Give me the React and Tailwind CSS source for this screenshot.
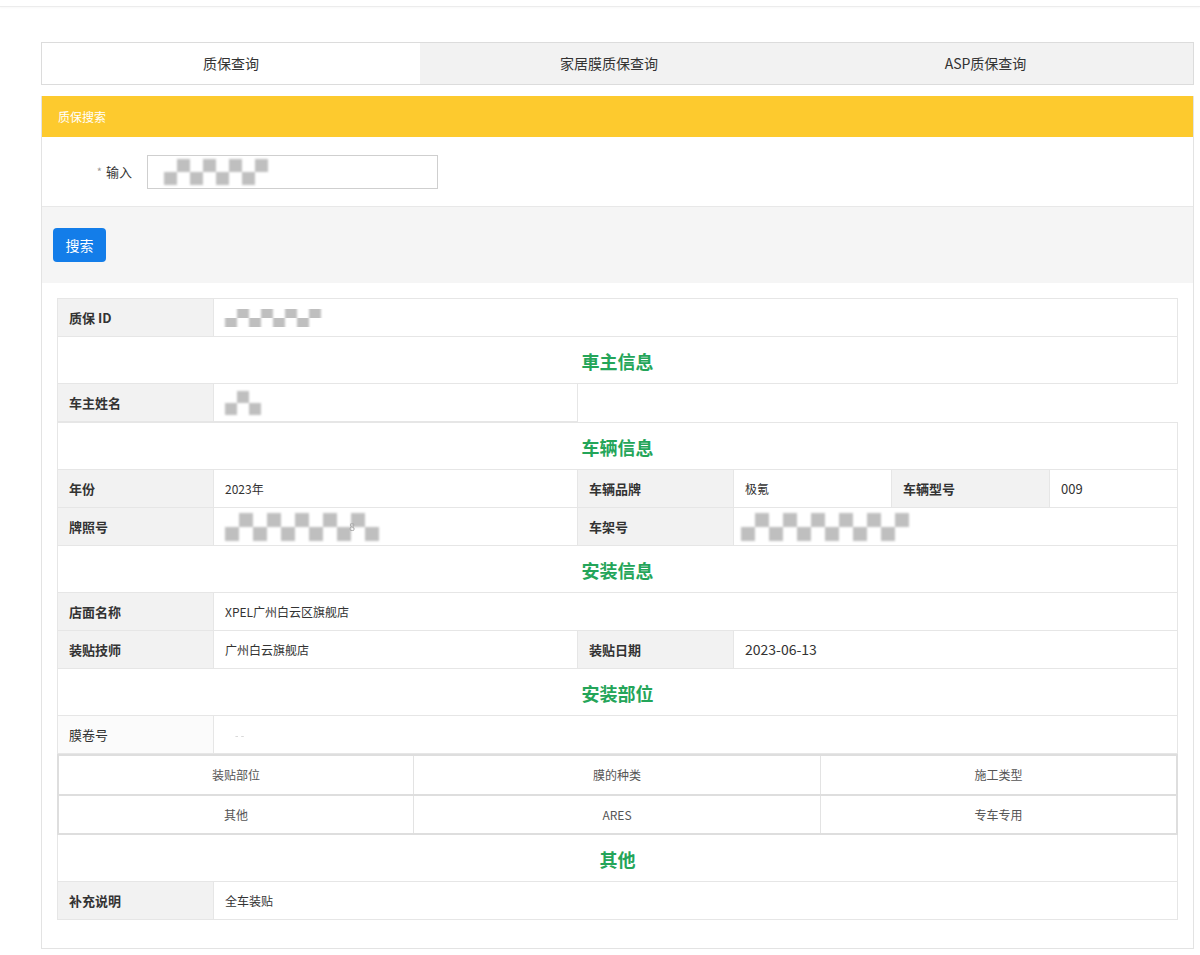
import React from "react";

const FONT = { fontFamily: '"Noto Sans CJK SC", "Noto Sans", "Liberation Sans", sans-serif' };

function Mosaic({ cols, rows = 2, size = 13, offset = 0, className = "" }) {
  const cells = [];
  for (let r = 0; r < rows; r++) {
    for (let c = 0; c < cols; c++) {
      const dark = (r + c + offset) % 2 === 0;
      cells.push(
        <div
          key={r + "-" + c}
          className={dark ? "bg-[#b9b9b9]" : "bg-white"}
          style={{ width: size, height: size }}
        />
      );
    }
  }
  return (
    <div
      className={"grid blur-[1px] opacity-90 " + className}
      style={{ gridTemplateColumns: `repeat(${cols}, ${size}px)` }}
    >
      {cells}
    </div>
  );
}

function Label({ children, w, plain }) {
  return (
    <div
      className={
        "flex items-center pl-[11px] border-r border-[#e6e6e6] shrink-0 text-[13px] text-[#333] " +
        (plain ? "bg-[#fbfbfb] font-normal " : "bg-[#f2f2f2] font-bold ") +
        w
      }
    >
      {children}
    </div>
  );
}

function Value({ children, w, className = "" }) {
  return (
    <div className={"flex items-center pl-[11px] text-[12px] text-[#333] border-r border-[#e6e6e6] " + w + " " + className}>
      {children}
    </div>
  );
}

function Row({ children }) {
  return <div className="flex h-[38px] border-b border-[#e6e6e6]">{children}</div>;
}

function Section({ title }) {
  return (
    <div className="flex h-[47px] items-center justify-center border-b border-[#e6e6e6] border-r">
      <span className="text-[18px] font-bold text-[#24a559] pt-[2px]">{title}</span>
    </div>
  );
}

export default function App() {
  return (
    <div className="w-[1200px] h-[955px] bg-white overflow-hidden" style={FONT}>
      <div className="h-[7px] border-b border-[#ececec] shadow-[0_1px_2px_rgba(0,0,0,0.03)]" />

      <div className="ml-[41px] w-[1153px] mt-[35px]">
        {/* Tabs */}
        <div className="flex h-[43px] border border-[#dcdcdc] bg-[#f2f2f2] text-[14px] text-[#333]">
          <div className="w-[378px] bg-white flex items-center justify-center">质保查询</div>
          <div className="w-[378px] flex items-center justify-center">家居膜质保查询</div>
          <div className="flex-1 flex items-center justify-center pr-[20px]">ASP质保查询</div>
        </div>

        {/* Panel */}
        <div className="mt-[11px] border-l border-r border-b border-[#e3e3e3] h-[853px]">
          <div className="h-[41px] bg-[#fdca2e] flex items-center pl-[16px] text-[12px] text-white">质保搜索</div>

          <div className="h-[69px] flex items-center">
            <div className="w-[90px] flex justify-end items-center text-[13px] text-[#333]">
              <span className="text-[#999] text-[11px] mr-[4px]">*</span>输入
            </div>
            <div className="ml-[15px] w-[291px] h-[34px] border border-[#cfcfcf] flex items-center pl-[16px]">
              <Mosaic cols={8} size={13} offset={1} />
            </div>
          </div>

          <div className="h-[77px] bg-[#f5f5f5] border-t border-[#e8e8e8] pl-[11px] pt-[21px]">
            <button className="w-[53px] h-[34px] rounded-[4px] bg-[#137de9] text-white text-[14px] flex items-center justify-center">
              搜索
            </button>
          </div>

          {/* Result table */}
          <div className="px-[15px] pt-[15px]">
            <div className="border-t border-l border-[#e6e6e6]">
              <Row>
                <Label w="w-[156px]">质保 ID</Label>
                <Value w="flex-1">
                  <Mosaic cols={8} rows={2} size={12} offset={1} className="scale-y-75" />
                </Value>
              </Row>
              <Section title="車主信息" />
              <div className="flex h-[38px]">
                <Label w="w-[156px] border-b">车主姓名</Label>
                <Value w="w-[364px] border-b">
                  <Mosaic cols={3} rows={2} size={12} offset={1} />
                </Value>
                <div className="flex-1" />
              </div>
              <div className="border-t border-[#e6e6e6]">
                <Section title="车辆信息" />
              </div>
              <Row>
                <Label w="w-[156px]">年份</Label>
                <Value w="w-[364px]">2023年</Value>
                <Label w="w-[156px]">车辆品牌</Label>
                <Value w="w-[158px]">极氪</Value>
                <Label w="w-[158px]">车辆型号</Label>
                <Value w="flex-1" className="text-[13px]">009</Value>
              </Row>
              <Row>
                <Label w="w-[156px]">牌照号</Label>
                <Value w="w-[364px]">
                  <div className="flex items-center">
                    <Mosaic cols={11} rows={2} size={14} offset={1} />
                    <span className="text-[#aaa] text-[11px] -ml-[30px] blur-[0.5px]">8</span>
                  </div>
                </Value>
                <Label w="w-[156px]">车架号</Label>
                <Value w="flex-1" className="pl-0 -ml-[4px]">
                  <Mosaic cols={12} rows={2} size={14} offset={1} />
                </Value>
              </Row>
              <Section title="安装信息" />
              <Row>
                <Label w="w-[156px]">店面名称</Label>
                <Value w="flex-1">XPEL广州白云区旗舰店</Value>
              </Row>
              <Row>
                <Label w="w-[156px]">装贴技师</Label>
                <Value w="w-[364px]">广州白云旗舰店</Value>
                <Label w="w-[156px]">装贴日期</Label>
                <Value w="flex-1" className="text-[14px] pl-[10px]">2023-06-13</Value>
              </Row>
              <Section title="安装部位" />
              <Row>
                <Label w="w-[156px]" plain>膜卷号</Label>
                <Value w="flex-1">
                  <span className="text-[#ccc] text-[10px] ml-[10px] blur-[0.5px]">- -</span>
                </Value>
              </Row>
              <div className="border-2 border-[#dedede] border-t-0 text-[12px] text-[#555] -ml-px">
                <div className="flex h-[40px] border-t-2 border-[#dedede]">
                  <div className="w-[355px] flex items-center justify-center border-r border-[#e3e3e3]">装贴部位</div>
                  <div className="w-[407px] flex items-center justify-center border-r border-[#e3e3e3]">膜的种类</div>
                  <div className="flex-1 flex items-center justify-center">施工类型</div>
                </div>
                <div className="flex h-[39px] border-t-2 border-[#dedede]">
                  <div className="w-[355px] flex items-center justify-center border-r border-[#e3e3e3]">其他</div>
                  <div className="w-[407px] flex items-center justify-center border-r border-[#e3e3e3]">ARES</div>
                  <div className="flex-1 flex items-center justify-center">专车专用</div>
                </div>
              </div>
              <Section title="其他" />
              <Row>
                <Label w="w-[156px]">补充说明</Label>
                <Value w="flex-1">全车装贴</Value>
              </Row>
            </div>
          </div>
        </div>
      </div>
    </div>
  );
}
